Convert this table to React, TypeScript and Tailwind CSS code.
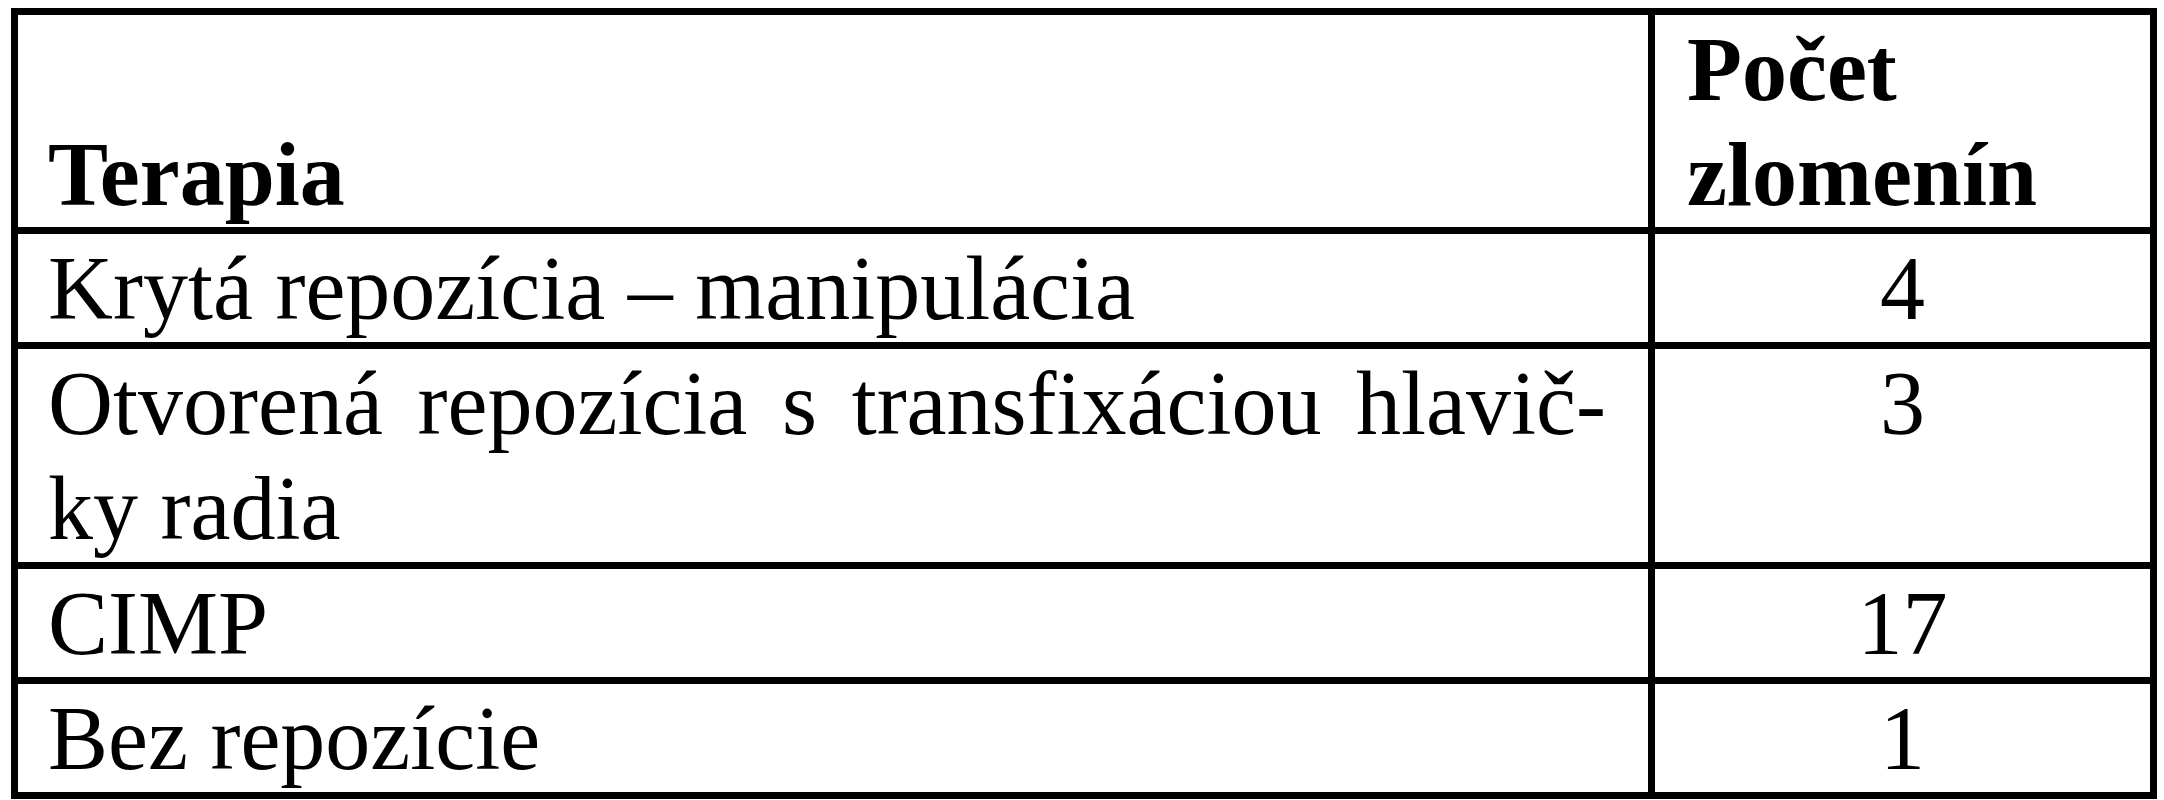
import React from 'react';

type Row = {
  label: React.ReactNode;
  count: string;
  height: string;
};

const rows: Row[] = [
  { label: 'Krytá repozícia – manipulácia', count: '4', height: 'h-[106px]' },
  {
    label: (
      <>
        <span className="block text-justify [text-align-last:justify]">
          Otvorená repozícia s transfixáciou hlavič-
        </span>
        <span className="block">ky radia</span>
      </>
    ),
    count: '3',
    height: 'h-[211px]',
  },
  { label: 'CIMP', count: '17', height: 'h-[106px]' },
  { label: 'Bez repozície', count: '1', height: 'h-[106px]' },
];

const App: React.FC = () => {
  return (
    <div className="min-h-[800px] w-full bg-white pt-[8px] pl-[11px]">
      <div
        className="grid w-[2146px] grid-cols-[1637px_502px] border-l-[7px] border-t-[7px] border-black text-[90px] leading-[105px] text-black"
        style={{ fontFamily: '"Liberation Serif", "Times New Roman", serif' }}
      >
        {/* header */}
        <div className="flex h-[219px] items-end border-r-[7px] border-b-[7px] border-black pl-[30px] pb-[0px] font-bold">
          Terapia
        </div>
        <div className="flex h-[219px] flex-col justify-end border-r-[7px] border-b-[7px] border-black pl-[32px] font-bold">
          <span>Počet</span>
          <span>zlomenín</span>
        </div>

        {rows.map((row, i) => (
          <React.Fragment key={i}>
            <div className={`${row.height} box-content border-r-[7px] border-b-[7px] border-black pl-[30px] pr-[42px] pt-[2px]`}>
              {row.label}
            </div>
            <div className={`${row.height} box-content border-r-[7px] border-b-[7px] border-black pt-[2px] text-center`}>
              {row.count}
            </div>
          </React.Fragment>
        ))}
      </div>
    </div>
  );
};

export default App;
